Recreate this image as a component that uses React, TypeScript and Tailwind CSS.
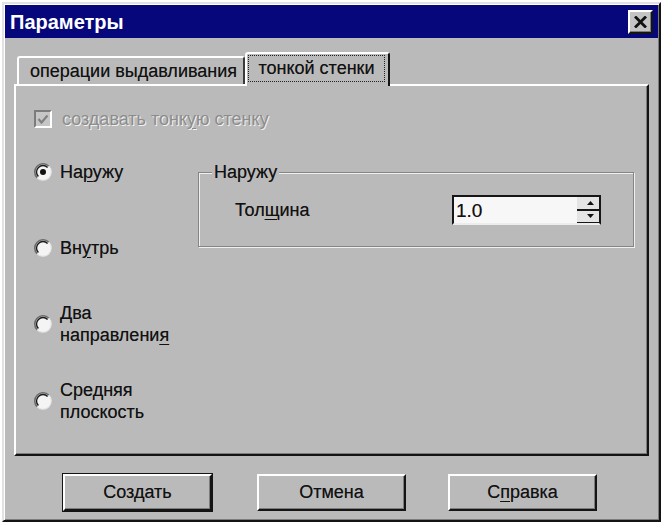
import React from 'react';

const Radio = ({ checked }: { checked?: boolean }) => (
  <svg width="18" height="18" viewBox="0 0 18 18" className="shrink-0">
    <circle cx="9" cy="9" r="8.2" fill="#f4f4f4" />
    <path d="M3.2 14.8 A8.2 8.2 0 0 1 14.8 3.2" fill="none" stroke="#6a6a6a" strokeWidth="1.6" />
    <path d="M4.4 13.6 A6.5 6.5 0 0 1 13.6 4.4" fill="none" stroke="#1a1a1a" strokeWidth="1.4" />
    <path d="M14.8 3.2 A8.2 8.2 0 0 1 3.2 14.8" fill="none" stroke="#e6e6e6" strokeWidth="1.2" />
    {checked && <circle cx="9" cy="9" r="3" fill="#111" />}
  </svg>
);

const Key = ({ children }: { children: React.ReactNode }) => (
  <span className="underline underline-offset-[3px] decoration-1">{children}</span>
);

const bevel =
  'border-2 border-t-white border-l-white border-r-[#141414] border-b-[#141414] shadow-[inset_-1px_-1px_0_#7c7c7c]';

const DialogButton = ({ children, isDefault, className = '' }: { children: React.ReactNode; isDefault?: boolean; className?: string }) => (
  <div
    className={`w-[149px] h-[37px] ${isDefault ? 'outline outline-1 outline-[#141414]' : ''} ${className}`}
  >
    <div className={`w-full h-full ${bevel} bg-[#bababa] flex items-center justify-center text-[18px] text-[#111]`}>
      {children}
    </div>
  </div>
);

export default function App() {
  return (
    <div className="w-[664px] h-[524px] bg-white overflow-hidden pt-[2px] pl-[2px] font-['Liberation_Sans',Arial,sans-serif] [text-shadow:0_0_0.3px_rgba(0,0,0,0.5)]">
      <div className="w-[659px] h-[520px] bg-[#bababa] border-2 border-t-[#e2e2e2] border-l-[#e2e2e2] border-r-[#141414] border-b-[#141414] shadow-[inset_1px_1px_0_#fff,inset_-1px_-1px_0_#7c7c7c] p-px flex flex-col">
        {/* title bar */}
        <div className="h-[33px] bg-[#07077c] flex items-center justify-between pl-[5px] pr-[5px]">
          <span className="text-white font-bold text-[20px] leading-none [text-shadow:none]">Параметры</span>
          <div className={`w-[25px] h-[24px] bg-[#c4c4c4] ${bevel} flex items-center justify-center`}>
            <svg width="13" height="12" viewBox="0 0 13 12">
              <path d="M2 1.5 L11 10.5 M11 1.5 L2 10.5" stroke="#111" strokeWidth="2.8" strokeLinecap="square" />
            </svg>
          </div>
        </div>

        <div className="px-[9px] pt-[14px] flex flex-col">
          {/* tabs */}
          <div className="flex items-end pl-[3px] h-[32px]">
            <div className="w-[228px] h-[28px] border-t-2 border-l-2 border-white border-r-2 border-r-[#3a3a3a] rounded-t-[3px] flex items-center pl-[11px] text-[18px] text-[#111]">
              операции выдавливания
            </div>
            <div className="relative z-10 -mb-[2px] w-[145px] h-[34px] bg-[#bababa] border-t-2 border-l-2 border-white border-r-2 border-r-[#141414] rounded-t-[3px] pl-px pt-px">
              <div className="w-[137px] h-[27px] border border-dotted border-[#222] flex items-center justify-center text-[18px] text-[#111]">
                тонкой стенки
              </div>
            </div>
          </div>

          {/* panel */}
          <div className="h-[372px] border-2 border-t-white border-l-white border-r-[#141414] border-b-[#141414] shadow-[inset_-1px_-1px_0_#7c7c7c] pl-[18px] pt-[24px]">
            <div className="flex items-center h-[18px]">
              <div className="w-[18px] h-[18px] border-2 border-t-[#7c7c7c] border-l-[#7c7c7c] border-r-white border-b-white bg-[#c6c6c6] flex items-center justify-center">
                <svg width="12" height="11" viewBox="0 0 12 11">
                  <path d="M1.5 5 L4.5 8.5 L10.5 1.5" fill="none" stroke="#808080" strokeWidth="2.2" />
                </svg>
              </div>
              <span className="ml-[10px] text-[18px] text-[#8c8c8c] [text-shadow:1px_1px_0_#f2f2f2]">
                создавать тонк<Key>у</Key>ю стенку
              </span>
            </div>

            <div className="flex mt-[32px]">
              {/* radios */}
              <div className="w-[164px] flex flex-col text-[18px] text-[#111]">
                <div className="h-[24px] flex items-center gap-[8px]">
                  <Radio checked />
                  <span>
                    На<Key>р</Key>ужу
                  </span>
                </div>
                <div className="mt-[52px] h-[24px] flex items-center gap-[8px]">
                  <Radio />
                  <span>
                    Вн<Key>у</Key>трь
                  </span>
                </div>
                <div className="mt-[42px] h-[44px] flex items-center gap-[8px]">
                  <Radio />
                  <span className="leading-[22px]">
                    Два
                    <br />
                    направлени<Key>я</Key>
                  </span>
                </div>
                <div className="mt-[33px] h-[44px] flex items-center gap-[8px]">
                  <Radio />
                  <span className="leading-[22px]">
                    Сре<Key>д</Key>няя
                    <br />
                    плоскость
                  </span>
                </div>
              </div>

              {/* group box */}
              <fieldset className="mt-px w-[436px] h-[86px] border border-[#858585] shadow-[inset_1px_1px_0_#f0f0f0,1px_1px_0_#f0f0f0] text-[18px] text-[#111]">
                <legend className="ml-[13px] px-[2px] leading-[22px] bg-[#bababa]">Наружу</legend>
                <div className="flex items-center justify-between pl-[36px] pr-[32px] pt-[12px]">
                  <span>
                    Тол<Key>щ</Key>ина
                  </span>
                  <div className="w-[149px] h-[30px] bg-[#f7f7f7] border-2 border-[#161616] border-b-[#ececec] flex items-center">
                    <span className="flex-1 pl-[2px] text-[19px] leading-none">1.0</span>
                    <div className="w-[22px] h-full flex flex-col">
                      <div className="flex-1 border-b-2 border-[#161616] bg-[#e4e4e4] flex items-center justify-end pr-[5px]">
                        <svg width="7" height="4" viewBox="0 0 7 4">
                          <path d="M0 4 L3.5 0 L7 4 Z" fill="#111" />
                        </svg>
                      </div>
                      <div className="flex-1 border-b border-[#161616] bg-[#e4e4e4] flex items-center justify-end pr-[5px]">
                        <svg width="7" height="4" viewBox="0 0 7 4">
                          <path d="M0 0 L3.5 4 L7 0 Z" fill="#111" />
                        </svg>
                      </div>
                    </div>
                  </div>
                </div>
              </fieldset>
            </div>
          </div>

          {/* buttons */}
          <div className="flex mt-[18px] pl-[49px]">
            <DialogButton isDefault>Создать</DialogButton>
            <DialogButton className="ml-[45px]">Отмена</DialogButton>
            <DialogButton className="ml-[42px]">
              С<Key>п</Key>равка
            </DialogButton>
          </div>
        </div>
      </div>
    </div>
  );
}
